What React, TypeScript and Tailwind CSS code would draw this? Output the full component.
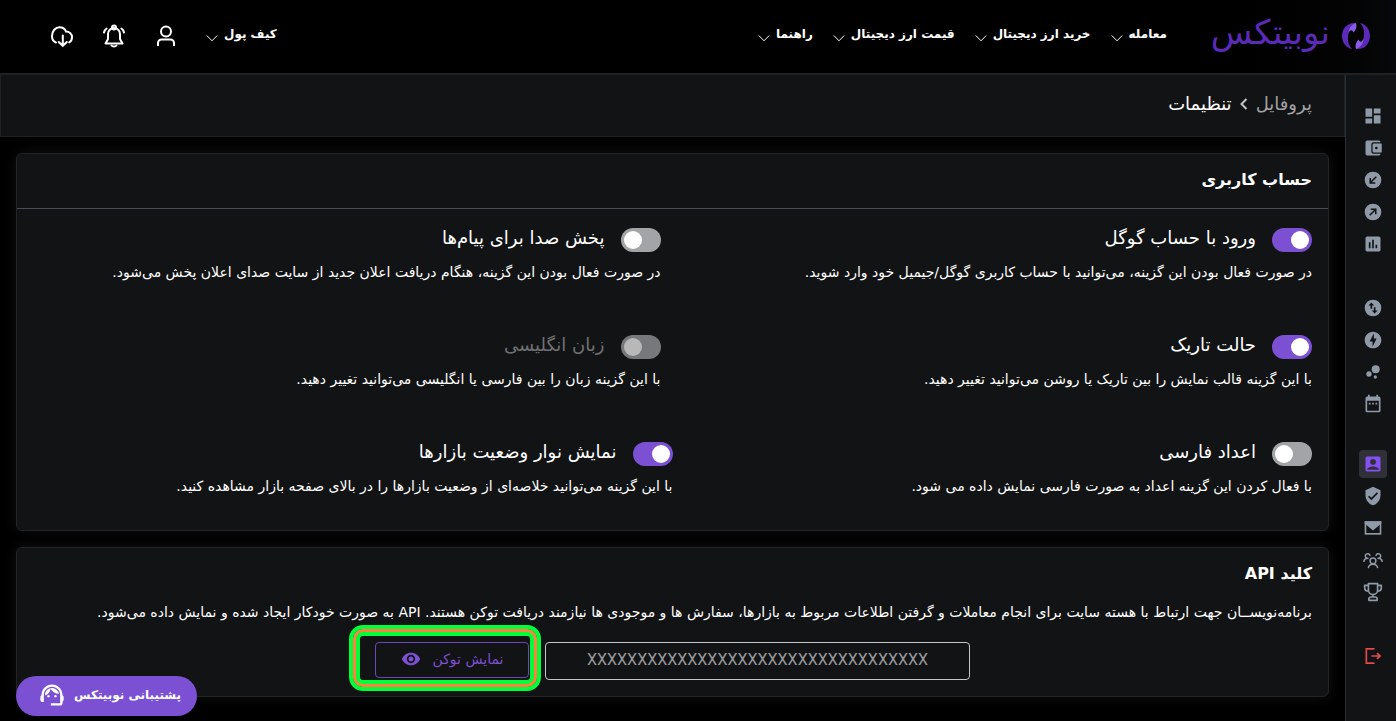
import React, { useState } from 'react';
import {
  MdAccountBox,
  MdAssessment,
  MdBubbleChart,
  MdDashboard,
  MdOfflineBolt,
  MdSupportAgent,
  MdVerifiedUser,
  MdVisibility,
} from 'react-icons/md';

type IconProps = { className?: string };

const NAV = ['معامله', 'خرید ارز دیجیتال', 'قیمت ارز دیجیتال', 'راهنما'];

function LogoMark() {
  return (
    <svg viewBox="0 0 28 28" className="size-7" aria-hidden="true">
      <path d="M14 1C5 0 0 7 0 14S4.500 26 10 27C7 24 5.500 20 6 15C6.500 9 9 4 14 1Z" fill="#5b2ab8" />
      <path d="M14 27C23 28 28 21 28 14S23.500 2 18 1C21 4 22.500 8 22 13C21.500 19 19 24 14 27Z" fill="#5b2ab8" />
      <path d="M14 1C9 3 6.500 7 6.500 11.500C7.500 8 10 7 11.500 10.500C14.500 7.500 15 4 14 1Z" fill="#8b5ce6" />
      <path d="M14 27C19 25 21.500 21 21.500 16.500C20.500 20 18 21 16.500 17.500C13.500 20.500 13 24 14 27Z" fill="#8b5ce6" />
    </svg>
  );
}

function Caret() {
  return (
    <svg viewBox="0 0 12 12" className="mt-1 size-3 shrink-0" fill="none" stroke="#fff" aria-hidden="true">
      <path d="M0.8 3.500L6 8.800L11.200 3.500" />
    </svg>
  );
}

function UserIcon() {
  return (
    <svg viewBox="0 0 24 24" className="size-6" fill="none" stroke="#fff" strokeWidth="2" aria-hidden="true">
      <circle cx="12" cy="7.500" r="5" />
      <path d="M4 22v-3a3.500 3.500 0 0 1 3.500-3.500h9A3.500 3.500 0 0 1 20 19v3" />
    </svg>
  );
}

function BellIcon() {
  return (
    <svg viewBox="0 0 24 24" className="size-6" fill="none" stroke="#fff" strokeWidth="2" strokeLinecap="round" strokeLinejoin="round" aria-hidden="true">
      <path d="M3.500 19.500h17L18 15V10a6 6 0 0 0-12 0v5l-2.500 4.500Z" />
      <circle cx="12" cy="3.600" r="2" />
      <path d="M9.500 21.500c1 1.400 4 1.400 5 0M2 8.500c.3-1.700 1.200-3 2.600-4M22 8.500c-.3-1.700-1.200-3-2.600-4" />
    </svg>
  );
}

function CloudIcon() {
  return (
    <svg viewBox="0 0 24 24" className="size-6" fill="none" stroke="#fff" strokeWidth="2" strokeLinecap="round" aria-hidden="true">
      <path d="M6 18.500C3.500 17.500 2 15 2 12C2 7 5.500 3.200 9.500 3.200c3 0 5.500 1.600 6.500 4.300c3.500 0 6 2.500 6 5.500c0 2.500-1 4.500-2.800 5.400" />
      <path d="M12.800 11.500v10M8.800 18l4 3.800l4-3.800" />
    </svg>
  );
}

function WalletIcon({ className }: IconProps) {
  return (
    <svg viewBox="0 0 24 24" className={className} fill="currentColor" aria-hidden="true">
      <path d="M21 5c0-1.100-.9-2-2-2H5a2 2 0 0 0-2 2v14a2 2 0 0 0 2 2h14c1.100 0 2-.9 2-2h-8.500A2.500 2.500 0 0 1 10 16.500v-9A2.500 2.500 0 0 1 12.500 5H21Z" />
      <path fillRule="evenodd" d="M13 6.500a1.500 1.500 0 0 0-1.500 1.500v8a1.500 1.500 0 0 0 1.500 1.500h9.500v-11H13Zm3 3.900a1.600 1.600 0 1 1 0 3.200a1.600 1.600 0 0 1 0-3.200Z" />
    </svg>
  );
}

function DepositIcon({ className }: IconProps) {
  return (
    <svg viewBox="0 0 24 24" className={className} aria-hidden="true">
      <circle cx="12" cy="12" r="10" fill="currentColor" />
      <path d="M16 8l-6.500 6.500M8.700 9.500v6h6" fill="none" stroke="#121314" strokeWidth="1.800" />
    </svg>
  );
}

function WithdrawIcon({ className }: IconProps) {
  return (
    <svg viewBox="0 0 24 24" className={className} aria-hidden="true">
      <circle cx="12" cy="12" r="10" fill="currentColor" />
      <path d="M8 16l6.500-6.500M9.300 8.700h6v6" fill="none" stroke="#121314" strokeWidth="1.800" />
    </svg>
  );
}

function SwapIcon({ className }: IconProps) {
  return (
    <svg viewBox="0 0 24 24" className={className} aria-hidden="true">
      <circle cx="12" cy="12" r="10" fill="currentColor" />
      <path d="M6.500 9L10 5.500L13.500 9H11v4H9V9ZM10.500 15L14 18.500L17.500 15H15v-4h-2v4Z" fill="#121314" />
    </svg>
  );
}

function CalendarIcon({ className }: IconProps) {
  return (
    <svg viewBox="0 0 24 24" className={className} fill="currentColor" aria-hidden="true">
      <path d="M19 3h-1V1h-2v2H8V1H6v2H5a2 2 0 0 0-2 2v15a2 2 0 0 0 2 2h14a2 2 0 0 0 2-2V5a2 2 0 0 0-2-2Zm0 17H5V8h14v12ZM7 10.500h2v2H7v-2Zm4 0h2v2h-2v-2Zm4 0h2v2h-2v-2Z" />
    </svg>
  );
}

function MailIcon({ className }: IconProps) {
  return (
    <svg viewBox="0 0 24 24" className={className} fill="none" aria-hidden="true">
      <rect x="3" y="5" width="18" height="14" stroke="currentColor" strokeWidth="2" />
      <path d="M2 4h20v2.500L12 15L2 6.500V4Z" fill="currentColor" />
    </svg>
  );
}

function GroupIcon({ className }: IconProps) {
  return (
    <svg viewBox="0 0 24 24" className={className} fill="none" stroke="currentColor" strokeWidth="1.800" strokeLinecap="round" aria-hidden="true">
      <circle cx="12" cy="13" r="3.500" />
      <path d="M6.500 21c.6-2.500 2.300-4 5.500-4s4.900 1.500 5.500 4" />
      <path d="M8.300 6.500A2.800 2.800 0 1 0 4.500 9.800M15.700 6.500a2.800 2.800 0 1 1 3.800 3.300M1 13.500c.5-2.300 2-3.500 5-3.500M23 13.500c-.5-2.300-2-3.500-5-3.500" />
    </svg>
  );
}

function TrophyIcon({ className }: IconProps) {
  return (
    <svg viewBox="0 0 24 24" className={className} fill="none" stroke="currentColor" strokeWidth="2" strokeLinejoin="round" aria-hidden="true">
      <path d="M6.500 2h11v7.500a5.500 5.500 0 0 1-11 0V2ZM6.500 4H2v2.500C2 9.500 4 11 7 11M17.500 4H22v2.500c0 3-2 4.500-5 4.500M12 15v3M7 22v-1.500A2.500 2.500 0 0 1 9.500 18h5a2.500 2.500 0 0 1 2.500 2.500V22H7Z" />
    </svg>
  );
}

function ExitIcon({ className }: IconProps) {
  return (
    <svg viewBox="0 0 24 24" className={className} fill="none" stroke="currentColor" strokeWidth="2" aria-hidden="true">
      <path d="M13 4V3.500H4v17h9V20" />
      <path d="M10 12h11M17 8.500l3.500 3.500l-3.500 3.500" />
    </svg>
  );
}

type SideItem = { label: string; Icon: React.ComponentType<IconProps>; active?: boolean };

const SIDE_GROUPS: { className: string; items: SideItem[] }[] = [
  {
    className: '',
    items: [
      { label: 'داشبورد', Icon: MdDashboard },
      { label: 'کیف پول', Icon: WalletIcon },
      { label: 'واریز', Icon: DepositIcon },
      { label: 'برداشت', Icon: WithdrawIcon },
      { label: 'گزارش', Icon: MdAssessment },
    ],
  },
  {
    className: 'mt-9',
    items: [
      { label: 'تبدیل', Icon: SwapIcon },
      { label: 'معامله سریع', Icon: MdOfflineBolt },
      { label: 'بازارها', Icon: MdBubbleChart },
      { label: 'تاریخچه', Icon: CalendarIcon },
    ],
  },
  {
    className: 'mt-8',
    items: [
      { label: 'پروفایل', Icon: MdAccountBox, active: true },
      { label: 'امنیت', Icon: MdVerifiedUser },
      { label: 'پیام‌ها', Icon: MailIcon },
      { label: 'دعوت دوستان', Icon: GroupIcon },
      { label: 'جوایز', Icon: TrophyIcon },
    ],
  },
];

type Setting = {
  id: string;
  title: string;
  text: string;
  on: boolean;
  disabled?: boolean;
  className?: string;
};

const SETTINGS: Setting[] = [
  {
    id: 'google',
    title: 'ورود با حساب گوگل',
    text: 'در صورت فعال بودن این گزینه، می‌توانید با حساب کاربری گوگل/جیمیل خود وارد شوید.',
    on: true,
  },
  {
    id: 'sound',
    title: 'پخش صدا برای پیام‌ها',
    text: 'در صورت فعال بودن این گزینه، هنگام دریافت اعلان جدید از سایت صدای اعلان پخش می‌شود.',
    on: false,
    className: 'pr-3',
  },
  {
    id: 'dark',
    title: 'حالت تاریک',
    text: 'با این گزینه قالب نمایش را بین تاریک یا روشن می‌توانید تغییر دهید.',
    on: true,
  },
  {
    id: 'english',
    title: 'زبان انگلیسی',
    text: 'با این گزینه زبان را بین فارسی یا انگلیسی می‌توانید تغییر دهید.',
    on: false,
    disabled: true,
    className: 'pr-3',
  },
  {
    id: 'digits',
    title: 'اعداد فارسی',
    text: 'با فعال کردن این گزینه اعداد به صورت فارسی نمایش داده می شود.',
    on: false,
  },
  {
    id: 'ticker',
    title: 'نمایش نوار وضعیت بازارها',
    text: 'با این گزینه می‌توانید خلاصه‌ای از وضعیت بازارها را در بالای صفحه بازار مشاهده کنید.',
    on: true,
  },
];

function SettingRow({ setting }: { setting: Setting }) {
  const [on, setOn] = useState(setting.on);
  return (
    <div className={setting.className}>
      <div className="flex items-center gap-4">
        <input
          id={setting.id}
          type="checkbox"
          checked={on}
          disabled={setting.disabled}
          onChange={(e) => setOn(e.target.checked)}
          className="relative h-6 w-10 shrink-0 appearance-none rounded-full bg-[#a3a4a7] before:absolute before:top-[3px] before:left-[3px] before:size-[18px] before:rounded-full before:bg-white checked:bg-[#7b50d2] checked:before:left-[19px] disabled:opacity-70"
        />
        <label
          htmlFor={setting.id}
          className={`pb-1 text-lg leading-5 whitespace-nowrap ${setting.disabled ? 'text-[#707173]' : ''}`}
        >
          {setting.title}
        </label>
      </div>
      <p className="mt-2 text-sm leading-6 whitespace-nowrap">{setting.text}</p>
    </div>
  );
}

function NavItem({ label }: { label: string }) {
  return (
    <button type="button" className="flex items-center gap-1.5 text-xs font-bold whitespace-nowrap">
      <span className="pb-1">{label}</span>
      <Caret />
    </button>
  );
}

export default function App() {
  return (
    <div dir="rtl" className="flex min-h-screen flex-col overflow-hidden bg-black font-['DejaVu_Sans',sans-serif] text-white">
      <header className="flex h-[75px] items-center border-b-2 border-[#1e2125] bg-linear-to-l from-[#070809] to-black to-15% pr-[26px] pb-[2px] pl-[50px]">
        <a href="#" className="flex items-center gap-3 text-[#5b2ab8]">
          <LogoMark />
          <span className="pb-2 text-[34px] leading-8">نوبیتکس</span>
        </a>
        <nav className="mr-11 flex gap-5">
          {NAV.map((label) => (
            <NavItem key={label} label={label} />
          ))}
        </nav>
        <div className="mr-auto flex items-center gap-7">
          <NavItem label="کیف پول" />
          <button type="button" aria-label="پروفایل"><UserIcon /></button>
          <button type="button" aria-label="اعلان‌ها"><BellIcon /></button>
          <button type="button" aria-label="دانلود"><CloudIcon /></button>
        </div>
      </header>

      <div className="flex grow">
        <aside className="w-[51px] shrink-0 border-l border-[#2b3037] bg-[#121314] pt-[27px] text-[#8e9aa8]">
          {SIDE_GROUPS.map((group, i) => (
            <nav key={i} className={`flex flex-col items-center gap-1 pl-1 ${group.className}`}>
              {group.items.map(({ label, Icon, active }) => (
                <a
                  key={label}
                  href="#"
                  aria-label={label}
                  className={`flex size-7 items-center justify-center rounded ${active ? 'bg-[#303138] text-[#8450f0]' : ''}`}
                >
                  <Icon className="size-5" />
                </a>
              ))}
            </nav>
          ))}
          <div className="mt-9 flex justify-center pl-1">
            <a href="#" aria-label="خروج" className="flex size-7 items-center justify-center text-[#e5484d]">
              <ExitIcon className="size-5" />
            </a>
          </div>
        </aside>

        <main className="min-w-0 grow">
          <div className="flex h-[62px] items-center gap-2 border border-t-0 border-[#1f2225] bg-[#121314] px-8 pb-1 text-lg">
            <a href="#" className="text-[#a2a2a4]">پروفایل</a>
            <svg viewBox="0 0 8 12" className="h-3 w-2" fill="none" stroke="#c4c4c6" strokeWidth="2" aria-hidden="true">
              <path d="M6.500 1L1.500 6L6.500 11" />
            </svg>
            <span>تنظیمات</span>
          </div>

          <div className="flex flex-col gap-4 p-4">
            <section className="rounded-md border border-[#222427] bg-[#121314] shadow-[0_0_14px_#111214]">
              <h2 className="border-b border-[#4a4c55] px-4 pt-3.5 pb-4 text-base leading-6 font-bold">حساب کاربری</h2>
              <div className="grid grid-cols-2 gap-y-[51px] pt-[19px] pb-8">
                {SETTINGS.map((setting, i) => (
                  <div key={setting.id} className={i % 2 === 0 ? 'pr-4' : ''}>
                    <SettingRow setting={setting} />
                  </div>
                ))}
              </div>
            </section>

            <section className="rounded-md border border-[#222427] bg-[#121314] px-4 pt-3.5 pb-4 shadow-[0_0_14px_#111214]">
              <h2 className="text-base leading-6 font-bold">کلید API</h2>
              <p className="mt-3.5 text-sm leading-6 whitespace-nowrap">
                برنامه‌نویســان جهت ارتباط با هسته سایت برای انجام معاملات و گرفتن اطلاعات مربوط به بازارها، سفارش ها و موجودی ها نیازمند دریافت توکن هستند. API به صورت خودکار ایجاد شده و نمایش داده می‌شود.
              </p>
              <div className="mt-[18px] flex justify-center gap-4">
                <input
                  readOnly
                  aria-label="توکن"
                  value="XXXXXXXXXXXXXXXXXXXXXXXXXXXXXXXXXX"
                  className="h-[38px] w-[425px] rounded border border-[#c5c6ca] bg-transparent pb-1 text-center font-[Roboto,sans-serif] text-base text-[#97989a]"
                />
                <div className="relative">
                  <button
                    type="button"
                    className="flex h-9 w-[154px] items-center justify-center gap-3 rounded border border-[#6b48b4] pb-[2px] text-sm text-[#7b50d2]"
                  >
                    <span>نمایش توکن</span>
                    <MdVisibility className="size-5" />
                  </button>
                  <span className="pointer-events-none absolute -top-[17px] -right-3 -left-[26px] h-[66px] rounded-[14px] border-4 border-[#00ff38] shadow-[inset_0_0_0_3px_#ff8040,inset_0_0_0_7px_#00ff38]" />
                </div>
              </div>
            </section>
          </div>
        </main>
      </div>

      <button
        type="button"
        className="fixed bottom-[5px] left-4 flex h-10 items-center gap-2 rounded-full bg-[#7b50d2] pr-4 pb-[2px] pl-[22px] text-xs font-bold"
      >
        <span>پشتیبانی نوبیتکس</span>
        <MdSupportAgent className="size-7" />
      </button>
    </div>
  );
}
